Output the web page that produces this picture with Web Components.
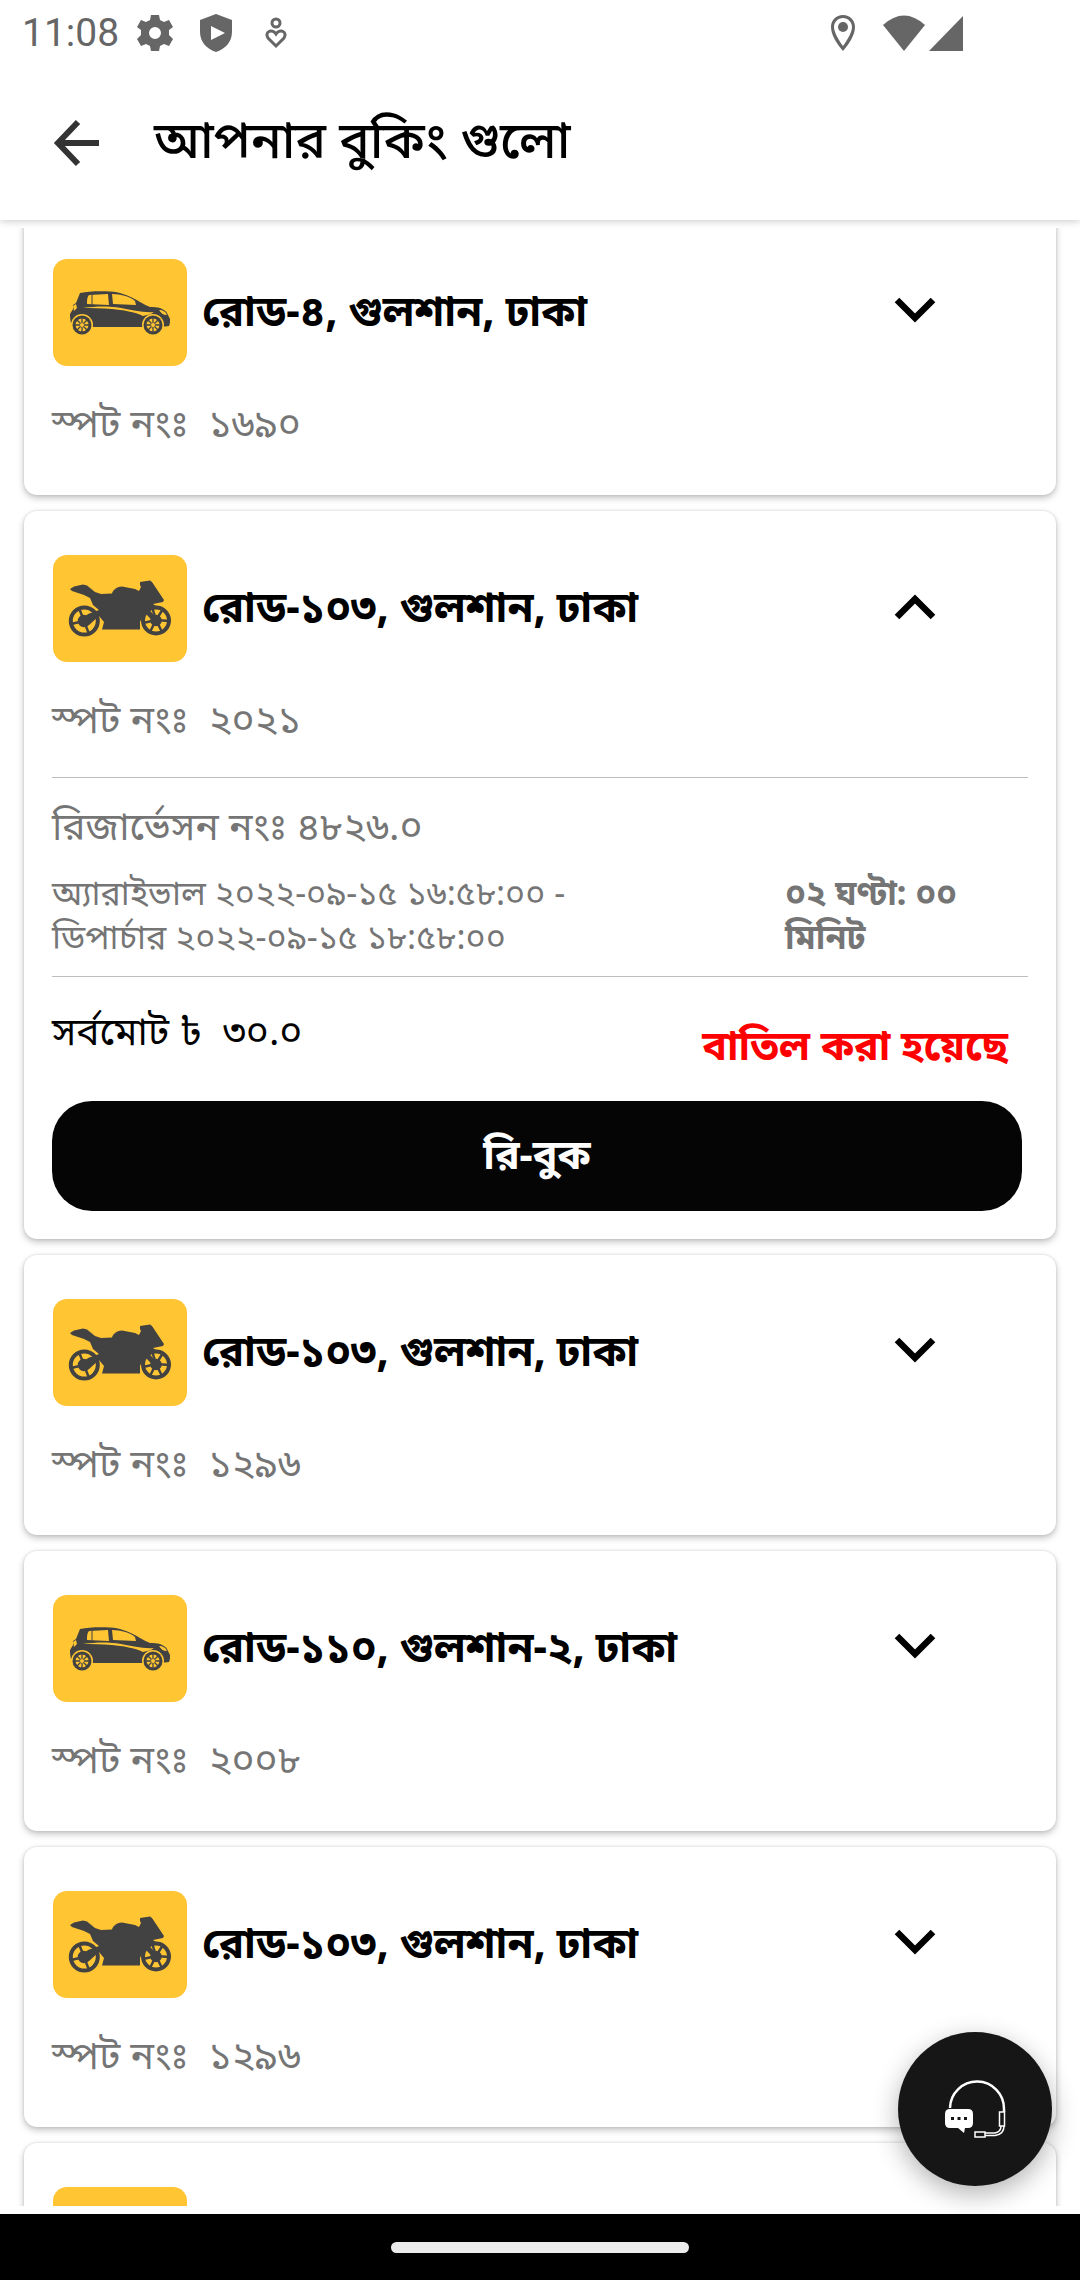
<!DOCTYPE html>
<html lang="bn">
<head>
<meta charset="utf-8">
<title>আপনার বুকিং গুলো</title>
<style>
html,body{margin:0;height:100%}
body{background:#fff;color:#000;font-family:"Noto Sans Bengali","Noto Sans",sans-serif}
</style>
</head>
<body>
<booking-app>
  <status-bar slot="status"></status-bar>
  <app-bar slot="top">আপনার বুকিং গুলো</app-bar>
  <booking-card vehicle="car" place="রোড-৪, গুলশান, ঢাকা" spot="১৬৯০"></booking-card>
  <booking-card vehicle="bike" place="রোড-১০৩, গুলশান, ঢাকা" spot="২০২১" open>
    <booking-details reservation="৪৮২৬.০" total="৩০.০">
      <span slot="times">অ্যারাইভাল ২০২২-০৯-১৫ ১৬:৫৮:০০ - ডিপার্চার ২০২২-০৯-১৫ ১৮:৫৮:০০</span>
      <span slot="duration">০২ ঘণ্টা: ০০ মিনিট</span>
      <span slot="state">বাতিল করা হয়েছে</span>
    </booking-details>
  </booking-card>
  <booking-card vehicle="bike" place="রোড-১০৩, গুলশান, ঢাকা" spot="১২৯৬"></booking-card>
  <booking-card vehicle="car" place="রোড-১১০, গুলশান-২, ঢাকা" spot="২০০৮"></booking-card>
  <booking-card vehicle="bike" place="রোড-১০৩, গুলশান, ঢাকা" spot="১২৯৬"></booking-card>
  <booking-card vehicle="bike" place="" spot=""></booking-card>
  <support-button slot="float"></support-button>
  <nav-pill slot="bottom"></nav-pill>
</booking-app>
<script>
class Base extends HTMLElement{
  constructor(){super();this.attachShadow({mode:'open'});}
  connectedCallback(){this.shadowRoot.innerHTML=this.view();}
}

customElements.define('status-bar',class extends Base{view(){return `
<style>
:host{display:flex;align-items:center;justify-content:space-between;height:66px;padding:0 117px 0 22px;color:#666;font:39px/44px Roboto,sans-serif}
div{display:flex;align-items:center}
svg{display:block;fill:currentColor}
.l{gap:18px}.r{gap:4px}
</style>
<div class="l"><span>11:08</span>
<svg width="36" height="38" viewBox="0 0 36 38"><path fill-rule="evenodd" d="M14 1h8l1 5 4 2 5-2 4 7-4 3v5l4 4-4 7-5-2-4 2-1 5h-8l-1-5-4-2-5 2-4-7 4-4v-5l-4-3 4-7 5 2 4-2zM18 13a6 6 0 1 0 0 12 6 6 0 1 0 0-12z"/></svg>
<svg width="50" height="40" viewBox="0 0 50 40"><path fill-rule="evenodd" d="M25 1l16 6v12c0 10-7 17-16 20C16 36 9 29 9 19V7zM20 13v14l14-7z"/></svg>
<svg width="34" height="34" viewBox="0 0 34 34" style="fill:none" stroke="currentColor" stroke-width="3"><circle cx="17" cy="7" r="4"/><path d="M17 30L9 22c-4-6 4-10 8-4 4-6 12-2 8 4z"/></svg>
</div>
<div class="r">
<svg width="49" height="38" viewBox="0 0 49 38"><path fill-rule="evenodd" d="M13 1c7 0 12 5 12 12 0 8-6 17-12 24C7 30 1 21 1 13 1 6 6 1 13 1zM13 4c-5 0-9 4-9 9 0 5 4 12 9 19 5-7 9-14 9-19 0-5-4-9-9-9z"/><circle cx="13" cy="13" r="5"/></svg>
<svg width="42" height="36" viewBox="0 0 42 36"><path d="M0 10Q21-9 42 10L21 36z"/></svg>
<svg width="34" height="36" viewBox="0 0 34 36"><path d="M0 36L34 1v35z"/></svg>
</div>`;}});

customElements.define('app-bar',class extends Base{view(){return `
<style>
:host{display:flex;align-items:center;gap:54px;height:154px;padding:0 50px;box-sizing:border-box;position:relative;box-shadow:0 1px 8px rgba(0,0,0,.22);clip-path:inset(0 0 -12px 0)}
button{border:0;background:none;padding:0;width:50px;height:50px}
svg{display:block}
h1{margin:0;padding-top:4px;font-size:51px;line-height:60px;font-weight:500}
</style>
<button aria-label="ফিরে যান"><svg width="50" height="50" viewBox="0 0 50 50" fill="none" stroke="#333" stroke-width="6"><path d="M49 25H9M28 4L8 25l20 21"/></svg></button>
<h1><slot></slot></h1>`;}});

const wheel=cx=>`<circle cx="${cx}" cy="66" r="11" fill="#ffc533"/><circle cx="${cx}" cy="66" r="9.500" fill="#424242"/><circle cx="${cx}" cy="66" r="6.500" fill="#ffc533"/><path stroke="#424242" stroke-width="1.300" d="M${cx} 59v14M${cx-7} 66h14M${cx-5} 61l10 10M${cx+5} 61l-10 10"/><circle cx="${cx}" cy="66" r="2" fill="#ffc533"/>`;
const art={
car:`<path fill="#424242" d="M27 34C36 32 48 32 57 32.500c5 0 9 1 13 2.500 7 2 12 5 17 8 4 2 7 4 10 5 4 0 7 0 10 1 3 1 6 3 7 5l3 6c0 3 0 5-1 7l-8 1H37l-19-4c-1-4-1-7-1-9l3-5v-4l3-2z"/>
<path fill="#ffc533" d="M36 36l19-1 1 11-22-1c0-4 0-7 2-9zM59 35c9 0 19 3 23 7l1 4-23-1zM21 52l-1-5 3-2 1 4zM30 49c14-2 26-2 38 0 12 2 22 5 33 4l-3 2-8 2c-8-4-20-6-31-7-11-1-20-1-29-1zM106 51c4 0 7 2 8 5-4 0-6-2-8-5z"/>
<path stroke="#424242" stroke-width="1" d="M39 35v11"/>${wheel(29)}${wheel(100)}`,
bike:`<path fill="#424242" d="M17 34L21 31.500 30 29.500 34 30.500 42 37 48 39 59 38.500C60 35 63 32 69 31.500L82 34 86 36 88 32 87 30V27L97 25.500 99 27 111 45 110 47 100 49 103 51 95 55 90 60 87 67V74.500H49L51 67 46 61 36 70 27 66 35 59 46 55 40 50 37 43 31 40 19 36Z"/>
<g fill="none" stroke="#424242" stroke-width="4"><circle cx="31.300" cy="66" r="13.500"/><circle cx="103" cy="65.500" r="13"/></g>
<g stroke="#424242" stroke-width="2.500" fill="#424242"><circle cx="31" cy="66" r="5"/><circle cx="103" cy="65.500" r="4.500"/><path d="M31 66l-5-13M31 66l-13 3M31 66l5 13M103 65l-4-13M103 65l-13 3M103 65l-6 12M103 65l6 12M103 65l13 1M103 65l7-11"/><path stroke-width="5" d="M92 54l10 11"/></g>`};

customElements.define('vehicle-tile',class extends Base{view(){return `
<style>:host{display:block;flex:none;width:134px;height:107px;border-radius:14px;background:#ffc533}svg{display:block}</style>
<svg width="134" height="107" viewBox="0 0 134 107">${art[this.getAttribute('kind')]}</svg>`;}});

customElements.define('booking-card',class extends Base{view(){
const o=this.hasAttribute('open');return `
<style>
:host{display:block;background:#fff;border-radius:13px;box-shadow:0 3px 7px rgba(0,0,0,.24),0 0 3px rgba(0,0,0,.12);padding:43px 28px 28px 28px}
.head{display:flex;align-items:center;gap:15px;height:108px;padding-left:1px}
h2{margin:0;flex:1;padding-top:6px;font-size:42px;line-height:52px;font-weight:700}
button{border:0;background:none;padding:0;margin-right:91px;width:44px;height:44px}
svg{display:block}
p{margin:36px 0 0;font-size:39px;line-height:50px;color:#757575;white-space:pre}
.pad{height:15px}
</style>
<div class="head"><vehicle-tile kind="${this.getAttribute('vehicle')}"></vehicle-tile><h2>${this.getAttribute('place')}</h2>
<button aria-expanded="${o}" aria-label="বিস্তারিত"><svg width="44" height="44" viewBox="0 0 44 44" fill="none" stroke="#000" stroke-width="6.500"><path d="${o?'M4 31L22 13l18 18':'M4 10l18 18 18-18'}"/></svg></button></div>
<p>${this.getAttribute('spot')?'স্পট নংঃ  '+this.getAttribute('spot'):' '}</p>
${o?'':'<div class="pad"></div>'}
<slot></slot>`;}});

customElements.define('booking-details',class extends Base{view(){return `
<style>
:host{display:block;color:#757575}
.res{margin:29px 0 0;border-top:1px solid #bdbdbd;padding-top:27px;font-size:39px;line-height:50px}
.when{display:flex;justify-content:space-between;padding:20px 43px 13px 0;border-bottom:1px solid #bdbdbd;font-size:34px;line-height:44px}
.times{width:580px}
.dur{font-weight:700;width:200px}
.sum{display:flex;justify-content:space-between;color:#000;font-size:39px;line-height:50px;padding:33px 20px 0 0}
.total{white-space:pre}
.state{color:#f00;font-weight:700;font-size:41px;padding-top:15px}
button{display:block;width:calc(100% - 6px);height:110px;margin-top:26px;border:0;border-radius:40px;padding:6px 0 0;background:#050505;color:#fff;font:700 41px/50px "Noto Sans Bengali","Noto Sans",sans-serif}
</style>
<div class="res">রিজার্ভেসন নংঃ ${this.getAttribute('reservation')}</div>
<div class="when"><div class="times"><slot name="times"></slot></div><div class="dur"><slot name="duration"></slot></div></div>
<div class="sum"><div class="total">সর্বমোট ৳  ${this.getAttribute('total')}</div><div class="state"><slot name="state"></slot></div></div>
<button>রি-বুক</button>`;}});

customElements.define('support-button',class extends Base{view(){return `
<style>
:host{display:block}
button{display:flex;align-items:center;justify-content:center;width:154px;height:154px;padding:0;border:0;border-radius:50%;background:#161616;box-shadow:0 8px 26px rgba(0,0,0,.3)}
</style>
<button aria-label="সহায়তা"><svg width="64" height="60" viewBox="0 0 64 60" fill="none" stroke="#fff">
<path stroke-width="2.500" d="M7 29a26 26 0 0 1 54 1v3"/>
<path stroke-width="1.500" d="M56.500 33h5v14h-5zM32 53h10v5H32zM42 56.500h10q9-1 9-9.500M42 54h10q6-1 6-7"/>
<path fill="#fff" stroke="none" d="M7 30h18q5 0 5 5v9q0 5-5 5h-3l-1 5-6-5H7q-5 0-5-5v-9q0-5 5-5z"/>
<path stroke="#161616" stroke-width="3" d="M8 39.500h3M14.500 39.500h3M21 39.500h3"/></svg></button>`;}});

customElements.define('nav-pill',class extends Base{view(){return `
<style>:host{display:flex;align-items:center;justify-content:center;height:66px;background:#000}
i{display:block;width:298px;height:11px;border-radius:6px;background:#ececec}</style><i></i>`;}});

customElements.define('booking-app',class extends Base{
connectedCallback(){super.connectedCallback();this.shadowRoot.querySelector('main').scrollTop=13;}
view(){return `
<style>
:host{display:flex;flex-direction:column;height:100vh;position:relative;overflow:hidden}
main{flex:1;min-height:0;overflow-y:auto;scrollbar-width:none;margin:8px 0;padding:0 24px}
.list{display:flex;flex-direction:column;gap:16px}
.float{position:absolute;right:28px;bottom:94px}
</style>
<slot name="status"></slot><slot name="top"></slot>
<main><div class="list"><slot></slot></div></main>
<div class="float"><slot name="float"></slot></div>
<slot name="bottom"></slot>`;}});
</script>
</body>
</html>
